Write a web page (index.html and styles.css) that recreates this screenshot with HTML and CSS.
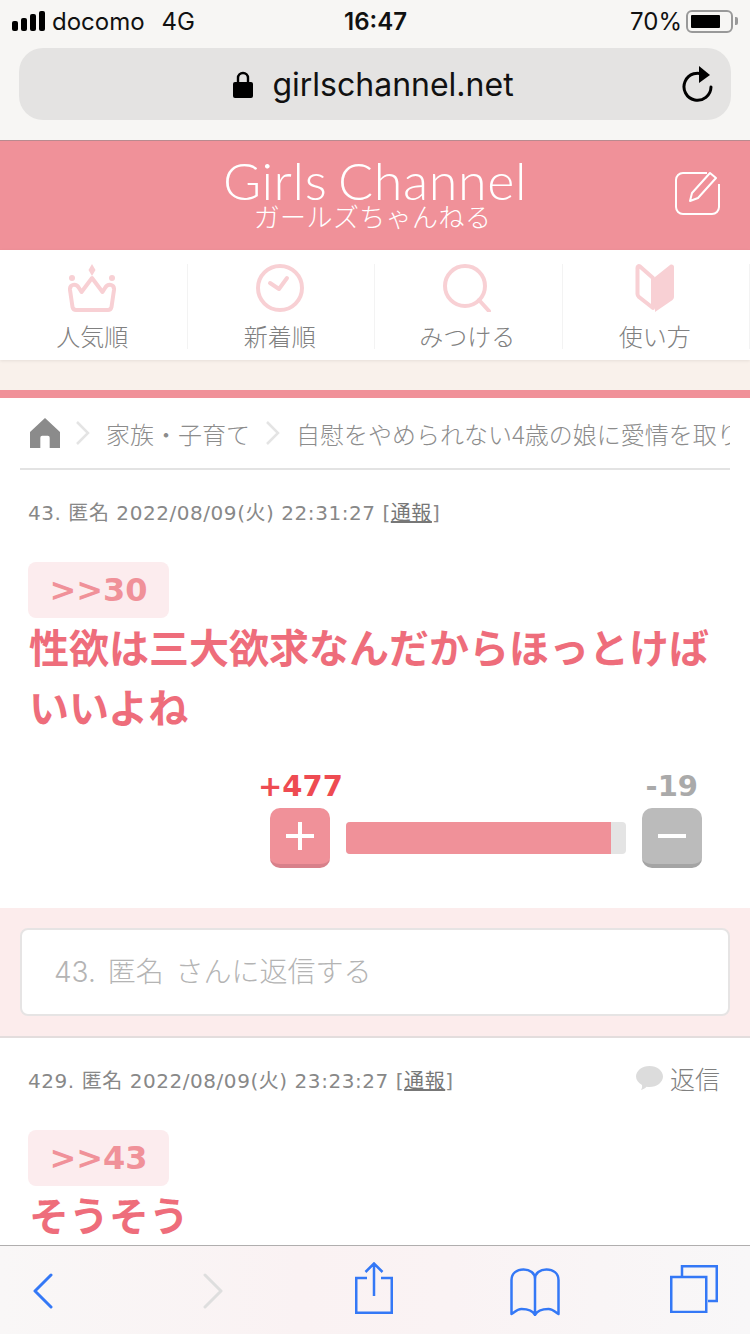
FILE: index.html
```html
<!DOCTYPE html>
<html lang="ja">
<head>
    <meta charset="UTF-8">
    <meta name="viewport" content="width=device-width, initial-scale=1.0">
    <title>Girls Channel</title>
    <link rel="stylesheet" href="styles.css">
</head>
<body>
    <div class="browser-top">
        <div class="status-bar">
            <div class="status-left">
                <span class="signal"><i></i><i></i><i></i><i></i></span>
                <span class="carrier">docomo</span>
                <span class="network">4G</span>
            </div>
            <div class="status-time">16:47</div>
            <div class="status-right">
                <span>70%</span>
                <span class="battery"><i></i></span>
                <span class="battery-tip"></span>
            </div>
        </div>
        <div class="url-bar">
            <svg class="lock" width="20" height="28" viewBox="0 0 20 28"><path d="M5 13V8a5 5 0 0 1 10 0v5" fill="none" stroke="#000" stroke-width="2.4"/><rect x="0" y="12" width="20" height="16" rx="2"/></svg>
            <span class="url-text">girlschannel.net</span>
            <svg class="reload" width="32" height="38" viewBox="0 0 32 38"><path d="M24 10.500A13.500 13.500 0 1 0 30 22" fill="none" stroke="#000" stroke-width="3" stroke-linecap="round"/><path d="M18 1l11 9-11 8z"/></svg>
        </div>
    </div>

    <header class="site-header">
        <div class="logo">
            <div class="logo-en">Girls Channel</div>
            <div class="logo-ja">ガールズちゃんねる</div>
        </div>
        <svg class="post-icon" width="46" height="46" viewBox="0 0 46 46" fill="none" stroke="#fff" stroke-width="2"><path d="M33 3H9a7 7 0 0 0-7 7v27a7 7 0 0 0 7 7h29a7 7 0 0 0 7-7V14"/><path d="M16 31l2-8L36 3l6 5-18 20z" stroke-linejoin="round"/></svg>
    </header>

    <nav class="main-nav">
        <a class="nav-item">
            <svg width="48" height="48" viewBox="0 0 48 48" fill="none" stroke="#f8d0d4" stroke-width="4"><path d="M24 0l3.500 6-3.500 6-3.500-6z" fill="#f8d0d4" stroke="none"/><circle cx="4" cy="14" r="3" fill="#f8d0d4" stroke="none"/><circle cx="44" cy="14" r="3" fill="#f8d0d4" stroke="none"/><path d="M8 46h32c2 0 3-1 3.500-3L46 26c.5-6-6-7-9-2l-2.500 4L24 14 13.500 28 11 24c-3-5-9.500-4-9 2l2.500 17c.5 2 1.500 3 3.500 3z" stroke-linejoin="round"/></svg>
            <span>人気順</span>
        </a>
        <a class="nav-item">
            <svg width="48" height="48" viewBox="0 0 48 48" fill="none" stroke="#f8d0d4"><circle cx="24" cy="24" r="22" stroke-width="4"/><path d="M14 19l9 6 8-11" stroke-width="4" stroke-linecap="round" stroke-linejoin="round"/></svg>
            <span>新着順</span>
        </a>
        <a class="nav-item">
            <svg width="48" height="48" viewBox="0 0 48 48" fill="none" stroke="#f8d0d4" stroke-width="4"><circle cx="22" cy="22" r="20"/><path d="M36 36l10 11" stroke-linecap="round"/></svg>
            <span>みつける</span>
        </a>
        <a class="nav-item">
            <svg width="40" height="48" viewBox="0 0 40 48" fill="none"><path d="M20 13L35 1c2-1 4 0 4 2v30c0 1-.5 2-1.500 3L20 48z" fill="#f8d0d4"/><path d="M2.500 4c0-1.500 1-2.500 2.500-1.500L18 14v30L4 33c-1-1-1.500-2-1.500-3z" stroke="#f8d0d4" stroke-width="4" stroke-linejoin="round"/></svg>
            <span>使い方</span>
        </a>
    </nav>

    <div class="beige-band"></div>

    <main class="content">
        <div class="breadcrumb">
            <svg class="home" width="30" height="30" viewBox="0 0 32 32"><path d="M16 0L0 15v17h11V21a2 2 0 0 1 2-2h6a2 2 0 0 1 2 2v11h11V15z" fill="#8b8b8b"/></svg>
            <svg class="crumb-arrow" width="14" height="24" viewBox="0 0 14 24"><path d="M1 1l11 11L1 23" fill="none" stroke="#e4e4e4" stroke-width="2.500"/></svg>
            <span>家族・子育て</span>
            <svg class="crumb-arrow" width="14" height="24" viewBox="0 0 14 24"><path d="M1 1l11 11L1 23" fill="none" stroke="#e4e4e4" stroke-width="2.500"/></svg>
            <span class="crumb-last">自慰をやめられない4歳の娘に愛情を取り戻す方法</span>
        </div>

        <article class="comment">
            <div class="comment-meta">43. 匿名 2022/08/09(火) 22:31:27 [<u>通報</u>]</div>
            <div class="anchor">&gt;&gt;30</div>
            <p class="comment-body">性欲は三大欲求なんだからほっとけばいいよね</p>
            <div class="vote">
                <div class="vote-nums">
                    <span class="plus-num">+477</span>
                    <span class="minus-num">-19</span>
                </div>
                <div class="vote-row">
                    <div class="vote-btn plus"><i class="h"></i><i class="v"></i></div>
                    <div class="vote-bar"><div class="vote-fill" style="width: 94.600%"></div></div>
                    <div class="vote-btn minus"><i class="h"></i></div>
                </div>
            </div>
        </article>

        <div class="reply-band">
            <div class="reply-box">43. 匿名 さんに返信する</div>
        </div>

        <article class="comment second">
            <div class="comment-head">
                <div class="comment-meta">429. 匿名 2022/08/09(火) 23:23:27 [<u>通報</u>]</div>
                <div class="reply-link">
                    <svg width="27" height="24" viewBox="0 0 27 24"><path d="M13.500 0C21 0 27 4.700 27 10.500S21 21 13.500 21c-1 0-2 0-3-.2C9 22.500 7 23.500 5 24c1-1.500 1.300-3.500 1-5C2.500 17 0 14 0 10.500 0 4.700 6 0 13.500 0z" fill="#dcdcdc"/></svg>
                    <span>返信</span>
                </div>
            </div>
            <div class="anchor">&gt;&gt;43</div>
            <p class="comment-body">そうそう</p>
        </article>
    </main>

    <div class="toolbar">
        <svg class="tb-back" width="20" height="36" viewBox="0 0 20 36"><path d="M18 2L2 18l16 16" fill="none" stroke="#3478f6" stroke-width="3" stroke-linecap="round" stroke-linejoin="round"/></svg>
        <svg class="tb-forward" width="20" height="36" viewBox="0 0 20 36"><path d="M2 2l16 16L2 34" fill="none" stroke="#dedede" stroke-width="3" stroke-linecap="round" stroke-linejoin="round"/></svg>
        <svg class="tb-share" width="38" height="52" viewBox="0 0 38 52" fill="none" stroke="#3478f6" stroke-width="2.500"><path d="M12 16H1.250v34.750h35.500V16H26M19 34V1.500M10.500 10L19 1.500 27.500 10"/></svg>
        <svg class="tb-book" width="50" height="48" viewBox="0 0 50 48" fill="none" stroke="#3478f6" stroke-width="2.500" stroke-linejoin="round"><path d="M25 47V11C25 5 20 1.500 13.500 1.500 7 1.500 1.500 5 1.500 12v34c3-2 6-5 10-5 6 0 11 1 13.500 6 2.500-5 7.500-6 13.500-6 4 0 7 3 10 5V12c0-7-5.500-10.500-12-10.500C30 1.500 25 5 25 11"/></svg>
        <svg class="tb-tabs" width="48" height="48" viewBox="0 0 48 48" fill="none" stroke="#3478f6" stroke-width="2.500"><path d="M12 11V1.250h34.750V36H38"/><rect x="1.250" y="12" width="35" height="35"/></svg>
    </div>
</body>
</html>
```

FILE: styles.css
```css
* {
    box-sizing: border-box;
}

html, body {
    margin: 0;
    padding: 0;
}

body {
    width: 750px;
    height: 1334px;
    overflow: hidden;
    position: relative;
    background-color: #fff;
    font-family: "Noto Sans CJK JP", "Noto Sans", sans-serif;
}

.browser-top {
    height: 141px;
    background-color: #f7f6f4;
    border-bottom: 1px solid #b98a8f;
    padding: 0 19px;
}

.status-bar {
    height: 42px;
    margin: 0 -7px 6px;
    display: flex;
    align-items: center;
    justify-content: space-between;
    font-family: Inter, "Liberation Sans", sans-serif;
    font-size: 24px;
    color: #111;
    position: relative;
}

.status-left {
    display: flex;
    align-items: center;
}

.signal {
    display: flex;
    align-items: flex-end;
    gap: 3px;
    height: 20px;
    margin-right: 7px;
}

.signal i {
    display: block;
    width: 6px;
    background-color: #000;
    border-radius: 2px;
}

.signal i:nth-child(1) { height: 10px; }
.signal i:nth-child(2) { height: 13px; }
.signal i:nth-child(3) { height: 17px; }
.signal i:nth-child(4) { height: 20px; }

.carrier {
    margin-right: 17px;
}

.status-time {
    position: absolute;
    left: 332px;
    font-weight: 600;
}

.status-right {
    display: flex;
    align-items: center;
}

.battery {
    width: 47px;
    height: 23px;
    margin-left: 4px;
    border: 2px solid #999;
    border-radius: 6px;
    padding: 3px;
}

.battery i {
    display: block;
    width: 29px;
    height: 13px;
    background-color: #000;
    border-radius: 1px;
}

.battery-tip {
    width: 3px;
    height: 8px;
    margin-left: 2px;
    background-color: #999;
    border-radius: 0 2px 2px 0;
}

.url-bar {
    height: 72px;
    padding-right: 3px;
    border-radius: 24px;
    background-color: #e4e3e2;
    display: flex;
    align-items: center;
    justify-content: center;
    position: relative;
    font-family: Inter, "Liberation Sans", sans-serif;
    font-size: 32px;
    color: #111;
}

.lock {
    margin-right: 19px;
}

.reload {
    position: absolute;
    right: 18px;
    top: 17px;
}

.site-header {
    height: 109px;
    background-color: #f09199;
    position: relative;
    display: flex;
    justify-content: center;
}

.logo {
    text-align: center;
    color: #fff;
    padding-top: 9px;
}

.logo-en {
    font-family: Lato, sans-serif;
    font-weight: 300;
    font-size: 52px;
    line-height: 60px;
    letter-spacing: 0.6px;
    word-spacing: -4px;
}

.logo-ja {
    font-size: 26px;
    font-weight: 300;
    line-height: 28px;
    letter-spacing: 0.4px;
    margin-top: -8px;
    padding-right: 5px;
}

.post-icon {
    position: absolute;
    right: 30px;
    top: 29px;
}

.main-nav {
    height: 110px;
    display: flex;
    background-color: #fff;
    padding: 14px 0 11px;
    box-shadow: 0 1px 3px rgba(0, 0, 0, 0.08);
    position: relative;
}

.nav-item {
    width: 187.500px;
    padding-right: 2px;
    display: flex;
    flex-direction: column;
    align-items: center;
    border-right: 1px solid #f3f3f3;
    font-size: 24px;
    line-height: 26px;
    color: #808080;
    font-weight: 300;
}

.nav-item span {
    margin-top: 11px;
}

.beige-band {
    height: 30px;
    background-color: #f9f1eb;
}

.content {
    border-top: 8px solid #f09199;
}

.breadcrumb {
    height: 72px;
    margin: 0 20px;
    border-bottom: 2px solid #e3e3e3;
    padding: 0 0 0 10px;
    display: flex;
    align-items: center;
    white-space: nowrap;
    overflow: hidden;
    font-size: 24px;
    font-weight: 300;
    color: #8c8c8c;
}

.home {
    flex-shrink: 0;
    margin-right: 16px;
}

.crumb-arrow {
    flex-shrink: 0;
    margin-right: 16px;
}

.breadcrumb span {
    margin-right: 16px;
}

.comment {
    padding: 0 28px;
}

.comment-meta {
    font-family: "DejaVu Sans", "Noto Sans CJK JP", sans-serif;
    font-size: 20px;
    line-height: 30px;
    letter-spacing: 0.55px;
    color: #888;
    padding-top: 28px;
}

.comment-meta u {
    color: #777;
}

.anchor {
    width: 141px;
    height: 56px;
    margin-top: 34px;
    background-color: #fcecee;
    border-radius: 8px;
    text-align: center;
    font-family: "DejaVu Sans", sans-serif;
    font-weight: bold;
    font-size: 32px;
    line-height: 56px;
    color: #f09199;
}

.comment-body {
    margin: -2px 0 0;
    padding: 0 1px;
    font-size: 40px;
    font-weight: bold;
    line-height: 60px;
    color: #ee6d7b;
}

.vote {
    width: 432px;
    margin: 34px 20px 0 auto;
    padding-bottom: 40px;
}

.vote-nums {
    display: flex;
    justify-content: space-between;
    font-family: "DejaVu Sans", sans-serif;
    font-weight: bold;
    font-size: 29px;
    line-height: 32px;
    margin: 0 4px 0 -12px;
}

.plus-num {
    color: #ee4b52;
}

.minus-num {
    color: #aaa;
}

.vote-row {
    display: flex;
    align-items: center;
    justify-content: space-between;
    margin-top: 6px;
}

.vote-btn {
    width: 60px;
    height: 60px;
    border-radius: 10px;
    position: relative;
}

.vote-btn.plus {
    background-color: #f09199;
    border-bottom: 4px solid #d8808a;
}

.vote-btn.minus {
    background-color: #bbb;
    border-bottom: 4px solid #a4a4a4;
}

.vote-btn i {
    position: absolute;
    background-color: #fff;
}

.vote-btn .h {
    width: 28px;
    height: 4px;
    left: 16px;
    top: 26px;
}

.vote-btn .v {
    width: 4px;
    height: 28px;
    left: 28px;
    top: 14px;
}

.vote-bar {
    width: 280px;
    height: 32px;
    background-color: #e4e4e4;
    border-radius: 4px;
    overflow: hidden;
}

.vote-fill {
    height: 100%;
    background-color: #f09199;
}

.reply-band {
    height: 130px;
    background-color: #fcecec;
    border-bottom: 2px solid #e3dddd;
    padding: 20px 20px 0;
}

.reply-box {
    height: 88px;
    background-color: #fff;
    border: 2px solid #e6e4e4;
    border-radius: 8px;
    padding: 0 32px;
    font-family: Inter, "Noto Sans CJK JP", sans-serif;
    font-size: 28px;
    font-weight: 300;
    line-height: 84px;
    word-spacing: 4px;
    color: #b4b4b4;
}

.comment-head {
    display: flex;
    justify-content: space-between;
    align-items: flex-end;
}

.reply-link {
    display: flex;
    align-items: center;
    gap: 7px;
    font-size: 25px;
    font-weight: 300;
    color: #808080;
    margin: 0 2px 3px 0;
    line-height: 30px;
}

.toolbar {
    position: absolute;
    left: 0;
    right: 0;
    bottom: 0;
    height: 89px;
    background: linear-gradient(90deg, #f9f7f7, #faf2f3 40%, #faf3f4 60%, #f8f7f8);
    border-top: 1px solid #b0aeae;
    display: flex;
    align-items: center;
}

.tb-back {
    margin: 2px 0 0 33px;
}

.tb-forward {
    margin: 2px 0 0 150px;
}

.tb-share {
    margin: 0 0 5px 132px;
}

.tb-book {
    margin: 3px 0 0 117px;
}

.tb-tabs {
    margin: -2px 0 0 110px;
}
```
